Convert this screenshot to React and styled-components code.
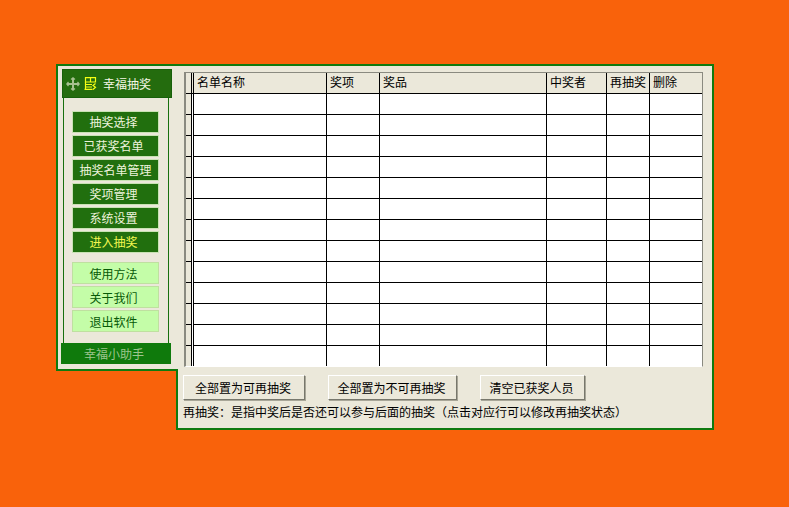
import React from 'react';
import styled, { createGlobalStyle } from 'styled-components';

const Global = createGlobalStyle`
  html, body { margin: 0; padding: 0; background: #f9620b; }
  body { font-family: "Noto Sans CJK SC", "Liberation Sans", sans-serif; font-size: 12px; color: #000; }
`;
const Page = styled.div`
  width: 789px; height: 507px; box-sizing: border-box; padding: 64px 0 0 56px;
  display: flex; align-items: flex-start; background: #f9620b; overflow: hidden;
`;
const Sidebar = styled.aside`
  position: relative; z-index: 1; box-sizing: border-box; width: 122px; height: 307px;
  background: #ebe8da; border: 2px solid #0f7a0f; border-right: 0;
  display: flex; flex-direction: column; align-items: flex-start; padding: 3px 0 0 4px;
`;
const Head = styled.div`
  box-sizing: border-box; width: 110px; height: 29px; background: #246c0e; border: 1px solid #17600a;
  display: flex; align-items: center; padding-left: 3px; color: #f4f6e4; line-height: 14px;
`;
const HeadTitle = styled.span` margin-left: 6px; `;
const Rail = styled.div`
  box-sizing: border-box; width: 106px; height: 245px; margin-left: 1px;
  border-left: 1px solid #17700d; border-right: 1px solid #17700d;
  padding: 13px 0 0 8px; display: flex; flex-direction: column;
`;
const Group = styled.div` display: flex; flex-direction: column; gap: 2px; margin-bottom: 9px; `;
const NavButton = styled.div`
  box-sizing: border-box; width: 87px; height: 22px; display: flex; align-items: center; justify-content: center;
  padding-right: ${p => p.$wide ? 0 : 4}px; padding-bottom: ${p => p.$light ? 0 : 2}px;
  border: 1px solid ${p => p.$light ? '#bfe0a0' : '#c9e2b4'};
  background: ${p => p.$light ? '#c4fda8' : '#216f0e'};
  color: ${p => p.$light ? '#075a07' : p.$active ? '#f4f750' : '#eef3dc'};
  white-space: nowrap;
`;
const Brand = styled.div`
  box-sizing: border-box; width: 110px; height: 21px; margin-left: -1px; background: #0f7a0c; color: #9ec58e;
  display: flex; align-items: center; justify-content: center; padding-right: 4px;
`;
const Main = styled.main`
  box-sizing: border-box; width: 536px; height: 366px;
  display: flex; flex-direction: column; border-right: 2px solid #0f7a0f;
  border-top: 2px solid #0f7a0f; background: #ebe8da;
`;
const TableWrap = styled.div`
  box-sizing: border-box; height: 304px; padding: 6px 9px 0 6px; flex: none;
`;
const GridFrame = styled.div`
  box-sizing: border-box; width: 519px; height: 295px; overflow: hidden; background: #fff;
  border-top: 1px solid #8a8a80; border-left: 2px solid #8a8a80; border-right: 1px solid #8a8a80;
  border-bottom: 1px solid #fff;
`;
const Table = styled.table`
  table-layout: fixed; width: 517px; border-collapse: separate; border-spacing: 0;
`;
const Th = styled.th`
  box-sizing: border-box; height: 21px; padding: 0 0 2px 3px; background: #ebe8da; font-weight: 400; text-align: left;
  border-right: 1px solid #000; border-bottom: 1px solid #000; white-space: nowrap; overflow: hidden; line-height: 18px;
`;
const Stub = styled.th`
  box-sizing: border-box; background: #ebe8da; border-right: 1px solid #000; border-bottom: 1px solid #000; padding: 0;
`;
const Gap = styled.th`
  box-sizing: border-box; background: ${p => p.$head ? '#ebe8da' : '#fff'}; border-right: 1px solid #000; padding: 0;
  ${p => p.$head && 'border-bottom: 1px solid #000;'}
`;
const Td = styled.td`
  box-sizing: border-box; height: 21px; padding: 0; background: #fff;
  border-right: 1px solid #000; border-bottom: 1px solid #000;
`;
const Bottom = styled.div`
  box-sizing: border-box; flex: 1; border-left: 2px solid #0f7a0f; border-bottom: 2px solid #0f7a0f;
  margin-left: -2px; padding: 5px 0 0 5px; background: #ebe8da;
  display: flex; flex-direction: column; gap: 3px;
`;
const Actions = styled.div` display: flex; gap: 23px; `;
const ActionButton = styled.div`
  box-sizing: border-box; height: 25px; width: ${p => p.$w}px; display: flex; align-items: center; justify-content: center;
  padding-right: 2px;
  background: #ebe8da; border: 1px solid; border-color: #fff #77776c #77776c #fff; box-shadow: 1px 1px 0 #a8a698;
  white-space: nowrap;
`;
const Note = styled.div` line-height: 18px; white-space: nowrap; `;

const Move = () => (
  <svg width="14" height="14" viewBox="0 0 14 14" fill="none" stroke="#a6c08f" strokeWidth="2">
    <path d="M7 1v12M1 7h12" />
    <path d="M5 2.500 7 .8l2 1.700M5 11.500l2 1.700 2-1.700M2.500 5 .8 7l1.700 2M11.500 5l1.700 2-1.700 2" strokeWidth="1.2" />
  </svg>
);
const Logo = () => (
  <svg width="13" height="13" viewBox="0 0 13 13" fill="none" stroke="#f6ff14" strokeWidth="1.200" style={{ marginLeft: 4 }}>
    <path d="M1.500 .6h10v4.400h-10zM6.500 .6v4.400" />
    <path d="M1.500 5v7M1.500 7.500h6.500M1.500 10h6.500M.5 12.300h8M11.500 6.500 9 8.500l2.500 1.800L9 12.500" />
  </svg>
);

const widths = [6, 2, 133, 53, 167, 60, 43, 53];
const headers = ['名单名称', '奖项', '奖品', '中奖者', '再抽奖', '删除'];
const rows = Array.from({ length: 13 }, (_, i) => i);

export default function App() {
  return (
    <>
      <Global />
      <Page>
        <Sidebar>
          <Head><Move /><Logo /><HeadTitle>幸福抽奖</HeadTitle></Head>
          <Rail>
            <Group>
              <NavButton>抽奖选择</NavButton>
              <NavButton>已获奖名单</NavButton>
              <NavButton $wide>抽奖名单管理</NavButton>
              <NavButton>奖项管理</NavButton>
              <NavButton>系统设置</NavButton>
              <NavButton $active>进入抽奖</NavButton>
            </Group>
            <Group>
              <NavButton $light>使用方法</NavButton>
              <NavButton $light>关于我们</NavButton>
              <NavButton $light>退出软件</NavButton>
            </Group>
          </Rail>
          <Brand>幸福小助手</Brand>
        </Sidebar>
        <Main>
          <TableWrap>
            <GridFrame>
              <Table>
                <colgroup>{widths.map((w, i) => <col key={i} style={{ width: w }} />)}</colgroup>
                <thead>
                  <tr>
                    <Stub /><Gap $head />
                    {headers.map(h => <Th key={h}>{h}</Th>)}
                  </tr>
                </thead>
                <tbody>
                  {rows.map(r => (
                    <tr key={r}>
                      <Stub /><Gap />
                      {headers.map(h => <Td key={h} />)}
                    </tr>
                  ))}
                </tbody>
              </Table>
            </GridFrame>
          </TableWrap>
          <Bottom>
            <Actions>
              <ActionButton $w={122}>全部置为可再抽奖</ActionButton>
              <ActionButton $w={129}>全部置为不可再抽奖</ActionButton>
              <ActionButton $w={105}>清空已获奖人员</ActionButton>
            </Actions>
            <Note>再抽奖：是指中奖后是否还可以参与后面的抽奖（点击对应行可以修改再抽奖状态）</Note>
          </Bottom>
        </Main>
      </Page>
    </>
  );
}
